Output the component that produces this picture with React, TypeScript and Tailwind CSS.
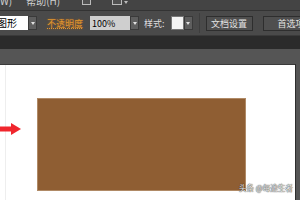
import React from "react";

const font = { fontFamily: '"Noto Sans CJK SC", "Liberation Sans", sans-serif' };

function Drop() {
  return (
    <div className="shrink-0 w-[9px] h-[14px] bg-[#5e5e5e] border border-[#3a3a3a] flex items-center justify-center">
      <div className="w-0 h-0 border-l-[2px] border-r-[2px] border-t-[3px] border-l-transparent border-r-transparent border-t-[#e0e0e0]" />
    </div>
  );
}

export default function App() {
  return (
    <div className="w-[300px] h-[200px] overflow-hidden flex flex-col bg-[#545454]" style={font}>
      {/* menu bar (clipped) */}
      <div className="h-[11px] shrink-0 bg-[#444444] flex items-end overflow-hidden border-b border-[#333333] text-[#cfcfcf] text-[10px] leading-[10px]">
        <span className="shrink-0 mb-[4px] whitespace-nowrap">W)</span>
        <span className="shrink-0 ml-[14px] mb-[4px] whitespace-nowrap">帮助(H)</span>
        <div className="shrink-0 ml-[22px] mb-[5px] w-[9px] h-[8px] border border-[#bbbbbb] bg-[#505050]" />
        <div className="shrink-0 ml-[21px] mb-[5px] w-[10px] h-[8px] border border-[#bbbbbb] bg-[#505050]" />
        <div className="shrink-0 ml-[2px] mb-[6px] w-0 h-0 border-l-[2px] border-r-[2px] border-t-[3px] border-l-transparent border-r-transparent border-t-[#bbbbbb]" />
      </div>
      {/* toolbar */}
      <div className="h-[25px] shrink-0 bg-[#4a4a4a] flex items-center border-b border-[#3a3a3a]">
        <div className="shrink-0 w-[28px] h-[14px] bg-white overflow-hidden flex items-center">
          <span className="text-[10px] leading-none text-black -ml-[3px] whitespace-nowrap">图形</span>
        </div>
        <Drop />
        <span className="shrink-0 whitespace-nowrap ml-[10px] text-[9px] leading-none text-[#e0962f] underline decoration-dotted [text-shadow:0_0_2px_#a8641c]">不透明度</span>
        <div className="shrink-0 ml-[7px] w-[40px] h-[14px] bg-[#cfcfcf] flex items-center px-[2px]">
          <span className="text-[9px] leading-none text-black">100%</span>
        </div>
        <Drop />
        <span className="shrink-0 whitespace-nowrap ml-[5px] text-[9px] leading-none text-[#dddddd]">样式:</span>
        <div className="shrink-0 ml-[6px] w-[13px] h-[14px] bg-[#f4f4f4] border border-[#777777]" />
        <Drop />
        <div className="shrink-0 ml-[6px] w-px h-[20px] bg-[#3e3e3e]" />
        <div className="shrink-0 ml-[6px] w-[47px] h-[15px] bg-[#4f4f4f] border border-[#2e2e2e] flex items-center justify-center">
          <span className="whitespace-nowrap text-[9px] leading-none text-[#e2e2e2]">文档设置</span>
        </div>
        <div className="ml-[10px] w-[50px] shrink-0 h-[15px] bg-[#4f4f4f] border border-[#2e2e2e] flex items-center pl-[14px]">
          <span className="text-[9px] leading-none text-[#e2e2e2] whitespace-nowrap">首选项</span>
        </div>
      </div>
      {/* dark band */}
      <div className="h-[13px] shrink-0 bg-[#2b2b2b]" />
      {/* gray area */}
      <div className="h-[15px] shrink-0 bg-[#555555]" />
      {/* canvas */}
      <div className="flex-1 flex">
        <div className="w-[295px] shrink-0 bg-white border-t border-[#3a3a3a] relative flex">
          <div className="w-px ml-[5px] bg-[#eeeeee]" />
          <div className="absolute left-0 top-[57px]">
            <svg width="22" height="14" viewBox="0 0 22 14">
              <rect x="0" y="4.5" width="13" height="5" fill="#f0262d" />
              <polygon points="11,1 21,7 11,13" fill="#f0262d" />
            </svg>
          </div>
          <div className="absolute left-[37px] top-[33px] w-[209px] h-[93px] bg-[#8f5e33] border border-[#b08a66]" />
          <span className="absolute left-[239px] top-[119px] text-[7.5px] leading-none text-[#f0f0f0] whitespace-nowrap [text-shadow:0_0_1px_#333,0_0_1px_#333]">头条 @每途生者</span>
        </div>
        <div className="w-px bg-[#2e2e2e]" />
        <div className="flex-1 bg-[#555555]" />
      </div>
    </div>
  );
}
